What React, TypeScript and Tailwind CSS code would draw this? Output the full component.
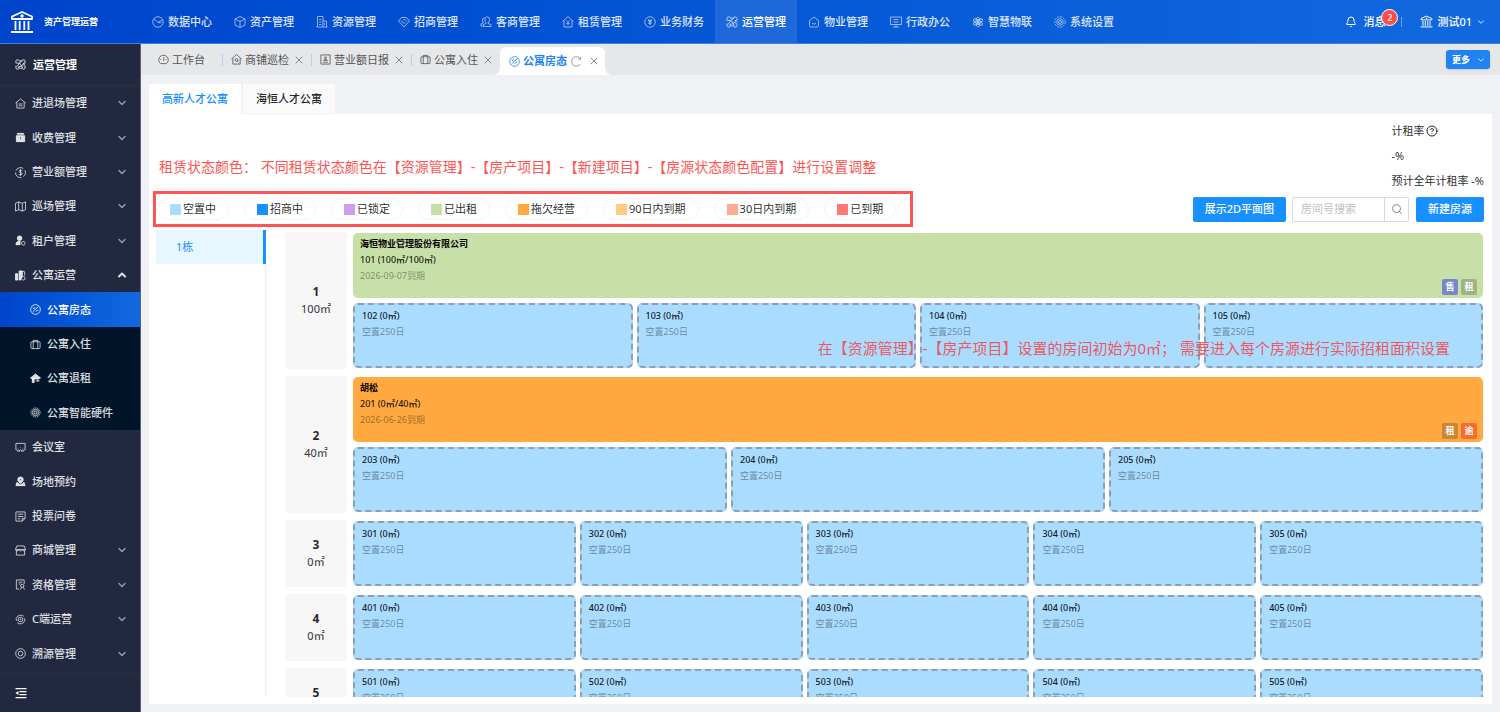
import React from 'react';
import clsx from 'clsx';
import { Bell, ChevronDown, ChevronUp, CircleHelp, Search, X } from 'lucide-react';

/** Dessins des icônes, sur une grille de 24 x 24 */
const ICONS: Record<string, React.ReactNode> = {
  data: (
    <>
      <circle cx="12" cy="12" r="10.500" />
      <path d="M4 6l8 7 9-6M12 13l5 1 3-3" />
    </>
  ),
  box: <path d="M12 1l10 5v12l-10 5-10-5V6zM2 6l10 5 10-5M12 11v12" />,
  building: <path d="M3 22V1h11v21M14 10h7v12M1 22h22M6 7h5M6 12h5M6 17h5M17 14v4" />,
  deal: <path d="M7 3h10l6 7-11 12L1 10zM6 9l6 6 3-3M10 9l3-3 5 5" />,
  clients: (
    <>
      <path d="M15 2a4 4 0 014 4v3a5 5 0 01-3 4v2l6 2v4H7v-4l5-2v-2a5 5 0 01-2-4V6a4 4 0 015-4z" />
      <path d="M9 4a4 4 0 00-4 4c0 3 1 4 2 5l-5 3v4h4" />
    </>
  ),
  rent: <path d="M1 11L12 1l11 10M4 9v13h16V9M9 9l3 4 3-4M12 13v6M9 15h6" />,
  finance: (
    <>
      <circle cx="12" cy="12" r="10.500" />
      <path d="M8 7l4 4 4-4M12 11v7M9 12h6M9 15h6" strokeWidth="2.200" />
    </>
  ),
  operate: (
    <>
      <path d="M8 2H5a3 3 0 00-3 3v4M16 2h3a3 3 0 013 3v4M22 15v4a3 3 0 01-3 3h-3M8 22H5a3 3 0 01-3-3v-4" />
      <path d="M3 9h6l7-5M8 4h8M4 17l6-8 5 6 5-7v8M8 20h8l-1-5-7 2z" />
    </>
  ),
  property: <path d="M12 2l9 7v10a3 3 0 01-3 3H6a3 3 0 01-3-3V9zM8 14c2 3 6 3 8 0" />,
  monitor: <path d="M1 2h22v15H1zM7 7h10M7 12h10M12 17v5M6 22h12" />,
  atom: (
    <>
      <ellipse cx="12" cy="12" rx="10" ry="4" transform="rotate(30 12 12)" />
      <ellipse cx="12" cy="12" rx="10" ry="4" transform="rotate(90 12 12)" />
      <ellipse cx="12" cy="12" rx="10" ry="4" transform="rotate(150 12 12)" />
      <circle cx="12" cy="12" r="2" fill="currentColor" />
    </>
  ),
  gear: (
    <>
      <circle cx="12" cy="12" r="10.500" strokeDasharray="4 2" />
      <path d="M12 5l6 3.500v7L12 19l-6-3.500v-7z" />
      <circle cx="12" cy="12" r="3" />
    </>
  ),
  home: <path d="M1 11L12 2l11 9M4 9v13h16V9M8 13h8M8 17h8" />,
  bag: (
    <path
      fill="currentColor"
      fillRule="evenodd"
      d="M5 3h14v2H5zM3 8h18v13H3zM12 10l-3 4h2v4h2v-4h2z"
    />
  ),
  dollar: (
    <>
      <path d="M18 3A11 11 0 002 8M1 12a11 11 0 0013 11M18 21a11 11 0 004-14" />
      <path d="M16 8c-2-2-7-1-7 1.500S16 12 16 14.500 10 18 8 16M12 5v14" />
    </>
  ),
  map: <path d="M1 5l7-3 8 3 7-3v17l-7 3-8-3-7 3zM8 2v17M16 5v17" />,
  tenant: (
    <>
      <circle cx="10" cy="7" r="5" fill="currentColor" />
      <path d="M2 21c0-6 4-8 9-8v8z" fill="currentColor" />
      <circle cx="18" cy="18" r="4" />
    </>
  ),
  apartment: (
    <>
      <path d="M1 8h5v14H1zM9 2h7v10l-4 10H9z" fill="currentColor" />
      <path d="M21 4v8M16 3h5" />
      <circle cx="18" cy="18" r="4" />
    </>
  ),
  state: (
    <>
      <circle cx="12" cy="12" r="10.500" />
      <path d="M6 17L18 6M6 9l3 1 2-3M13 17l3-4 2 1" />
    </>
  ),
  suitcase: <path d="M4 6h16a2 2 0 012 2v11a2 2 0 01-2 2H4a2 2 0 01-2-2V8a2 2 0 012-2zM7 21V3h10v18" />,
  leave: (
    <>
      <path fill="currentColor" d="M12 2L1 11h3v2h16v-2h3z" />
      <path fill="currentColor" d="M5 13h4v8H5z" />
      <path d="M12 17h9M17 14v6" />
    </>
  ),
  chip: (
    <>
      <circle cx="12" cy="12" r="10" strokeDasharray="3 1.500" />
      <circle cx="12" cy="12" r="7" />
      <path d="M9 9h6v6H9z" />
    </>
  ),
  meeting: (
    <>
      <path d="M4 17H2V3h20v14h-2" />
      <path d="M5 21c0-5 4-5 4 0 0-5 6-5 6 0 0-5 4-5 4 0M7 13v1M12 12v1M17 13v1" />
    </>
  ),
  booking: (
    <path
      fill="currentColor"
      fillRule="evenodd"
      d="M12 2a6 6 0 016 6c0 3-3 6-6 8-3-2-6-5-6-8a6 6 0 016-6zM12 6a2 2 0 100 4 2 2 0 000-4zM4 14l8 5 8-5 2 7H2z"
    />
  ),
  survey: <path d="M2 2h20v14l-6 6H2zM6 7h12M6 12h12M6 17h6M16 22v-6h6" />,
  shop: <path d="M4 2h16l3 8H1zM3 12v10h18V12M1 10c3 4 5 4 7 0 2 4 6 4 8 0 2 4 5 4 7 0" />,
  cert: (
    <>
      <path d="M9 22H3V2h17v9M8 7h8M8 11h4" />
      <circle cx="16" cy="15" r="3.500" />
      <path d="M14 18l-2 5M18 18l3 5" />
    </>
  ),
  eye: (
    <>
      <path d="M3 9a10 10 0 0116-4M21 15a10 10 0 01-16 4M2 9l2 6M22 15l-2-6" />
      <circle cx="12" cy="12" r="5" />
      <circle cx="12" cy="12" r="1" />
    </>
  ),
  trace: (
    <>
      <circle cx="12" cy="12" r="10.500" />
      <circle cx="12" cy="12" r="5" />
    </>
  ),
  fold: (
    <>
      <path d="M1 3h22M9 9h14M9 15h14M1 21h22" strokeWidth="2.500" />
      <path d="M1 12l6-4v8z" fill="currentColor" stroke="none" />
    </>
  ),
  dashboard: (
    <>
      <path d="M6 21a10.500 10 0 1112 0z" />
      <path d="M12 15l1-8M5 12h2M17 12h2" />
    </>
  ),
  patrol: (
    <>
      <path d="M1 11L12 1l11 10M4 9v13h16V9" />
      <circle cx="12" cy="13" r="3" />
      <path d="M14 15l2 3" />
    </>
  ),
  daily: (
    <>
      <path d="M2 2h20v20H2zM7 18h10" />
      <circle cx="12" cy="8" r="2" />
      <path d="M8 14c1-4 7-4 8 0z" />
    </>
  ),
  refresh: <path d="M21 17a10.500 10.500 0 110-10M21 2v5h-5" />,
  bank: (
    <>
      <path d="M12 2L2 6.500V9h20V6.500zM5.500 11v9M9.700 11v9M14.300 11v9M18.500 11v9M1 22h22" />
      <circle cx="12" cy="6" r="0.800" />
    </>
  ),
};

const Icon: React.FC<{ name: string; className?: string }> = ({ name, className }) => (
  <svg
    viewBox="0 0 24 24"
    fill="none"
    stroke="currentColor"
    strokeWidth="1.800"
    strokeLinejoin="round"
    className={clsx('shrink-0', className)}
    aria-hidden="true"
  >
    {ICONS[name]}
  </svg>
);

const NAV = [
  { icon: 'data', label: '数据中心' },
  { icon: 'box', label: '资产管理' },
  { icon: 'building', label: '资源管理' },
  { icon: 'deal', label: '招商管理' },
  { icon: 'clients', label: '客商管理' },
  { icon: 'rent', label: '租赁管理' },
  { icon: 'finance', label: '业务财务' },
  { icon: 'operate', label: '运营管理', active: true },
  { icon: 'property', label: '物业管理' },
  { icon: 'monitor', label: '行政办公' },
  { icon: 'atom', label: '智慧物联' },
  { icon: 'gear', label: '系统设置' },
];

interface MenuEntry {
  icon: string;
  label: string;
  arrow?: 'down' | 'up';
  sub?: boolean;
  active?: boolean;
}

const MENU: MenuEntry[] = [
  { icon: 'home', label: '进退场管理', arrow: 'down' },
  { icon: 'bag', label: '收费管理', arrow: 'down' },
  { icon: 'dollar', label: '营业额管理', arrow: 'down' },
  { icon: 'map', label: '巡场管理', arrow: 'down' },
  { icon: 'tenant', label: '租户管理', arrow: 'down' },
  { icon: 'apartment', label: '公寓运营', arrow: 'up' },
  { icon: 'state', label: '公寓房态', sub: true, active: true },
  { icon: 'suitcase', label: '公寓入住', sub: true },
  { icon: 'leave', label: '公寓退租', sub: true },
  { icon: 'chip', label: '公寓智能硬件', sub: true },
  { icon: 'meeting', label: '会议室' },
  { icon: 'booking', label: '场地预约' },
  { icon: 'survey', label: '投票问卷' },
  { icon: 'shop', label: '商城管理', arrow: 'down' },
  { icon: 'cert', label: '资格管理', arrow: 'down' },
  { icon: 'eye', label: 'C端运营', arrow: 'down' },
  { icon: 'trace', label: '溯源管理', arrow: 'down' },
];

const TABS = [
  { icon: 'patrol', label: '商铺巡检' },
  { icon: 'daily', label: '营业额日报' },
  { icon: 'suitcase', label: '公寓入住' },
];

const LEGEND = [
  { color: 'bg-[#aadcff]', label: '空置中' },
  { color: 'bg-[#1890ff]', label: '招商中' },
  { color: 'bg-[#ce9df0]', label: '已锁定' },
  { color: 'bg-[#c7e0a7]', label: '已出租' },
  { color: 'bg-[#ffa940]', label: '拖欠经营' },
  { color: 'bg-[#ffcc80]', label: '90日内到期' },
  { color: 'bg-[#ffab91]', label: '30日内到期' },
  { color: 'bg-[#ff7875]', label: '已到期' },
];

interface Lease {
  tenant: string;
  room: string;
  due: string;
  color: string;
  tags: { text: string; color: string }[];
}

interface Floor {
  no: number;
  area: string;
  lease?: Lease;
  rooms: string[];
}

const FLOORS: Floor[] = [
  {
    no: 1,
    area: '100㎡',
    lease: {
      tenant: '海恒物业管理股份有限公司',
      room: '101 (100㎡/100㎡)',
      due: '2026-09-07到期',
      color: 'bg-[#c7e0a7]',
      tags: [
        { text: '售', color: 'bg-[#7986cb]' },
        { text: '租', color: 'bg-[#9fb386]' },
      ],
    },
    rooms: ['102', '103', '104', '105'],
  },
  {
    no: 2,
    area: '40㎡',
    lease: {
      tenant: '胡松',
      room: '201 (0㎡/40㎡)',
      due: '2026-06-26到期',
      color: 'bg-[#ffa940]',
      tags: [
        { text: '租', color: 'bg-[#cc8733]' },
        { text: '逾', color: 'bg-[#f56c2f]' },
      ],
    },
    rooms: ['203', '204', '205'],
  },
  { no: 3, area: '0㎡', rooms: ['301', '302', '303', '304', '305'] },
  { no: 4, area: '0㎡', rooms: ['401', '402', '403', '404', '405'] },
  { no: 5, area: '0㎡', rooms: ['501', '502', '503', '504', '505'] },
];

/** Barre supérieure */
const Header: React.FC = () => (
  <header className="flex h-11 shrink-0 items-stretch border-b border-[#3a80e6] bg-gradient-to-r from-[#0044cc] to-[#1269df] text-white">
    <div className="flex w-[141px] shrink-0 items-center gap-2.5 pl-2.5">
      <Icon name="bank" className="size-6" />
      <h1 className="text-[9px] font-bold whitespace-nowrap">资产管理运营</h1>
    </div>
    <nav className="flex">
      {NAV.map((item) => (
        <a
          key={item.label}
          href="#"
          className={clsx(
            'flex items-center gap-1 px-[11px] font-medium whitespace-nowrap',
            item.active ? 'bg-white/10 text-white' : 'text-white/85'
          )}
        >
          <Icon name={item.icon} className="size-3 opacity-75" />
          {item.label}
        </a>
      ))}
    </nav>
    <div className="ml-auto flex items-center pr-3.5 font-medium">
      <button className="relative flex items-center gap-1.5">
        <Bell className="size-3" />
        消息
        <span className="absolute -top-[5px] left-9 flex size-[17px] items-center justify-center rounded-full border border-white bg-[#ff4d4f] text-[9px] leading-none">
          2
        </span>
      </button>
      <span className="ml-4 h-2.5 w-px bg-white/40" />
      <button className="ml-[18px] flex items-center gap-1">
        <Icon name="bank" className="size-[13px]" />
        测试01
        <ChevronDown className="size-2.5" />
      </button>
    </div>
  </header>
);

/** Menu latéral */
const Sidebar: React.FC = () => (
  <aside className="flex w-[141px] shrink-0 flex-col border-r border-[#5b6374] bg-[#212840] text-white">
    <div className="flex h-[42px] shrink-0 items-center gap-[7px] border-b border-[#2d3035] pl-[15px] font-bold">
      <Icon name="operate" className="size-[11px]" />
      运营管理
    </div>
    <ul className="mb-0.5 flex flex-1 flex-col">
      {MENU.map((item) => (
        <li key={item.label} className="flex flex-1">
          <a
            href="#"
            className={clsx(
              'flex flex-1 items-center gap-1.5 pr-3 font-medium',
              item.sub ? 'pl-[30px]' : 'pl-[15px]',
              item.sub && !item.active && 'bg-[#001529]',
              item.active && 'bg-gradient-to-r from-[#0044cc] to-[#1269df]',
              item.active ? 'text-white' : 'text-white/85'
            )}
          >
            <Icon name={item.icon} className="size-[11px]" />
            <span className="flex-1 whitespace-nowrap">{item.label}</span>
            {item.arrow === 'down' && <ChevronDown className="size-3 opacity-60" strokeWidth={3} />}
            {item.arrow === 'up' && <ChevronUp className="size-3" strokeWidth={4} />}
          </a>
        </li>
      ))}
    </ul>
    <button
      aria-label="收起"
      className="flex h-[39px] shrink-0 items-center border-t border-[#2d3035] pl-[15px]"
    >
      <Icon name="fold" className="size-3" />
    </button>
  </aside>
);

/** Onglets des pages ouvertes */
const PageTabs: React.FC = () => (
  <div className="flex h-[31px] shrink-0 items-center bg-[#e5e7e9] text-[#555]">
    <a href="#" className="flex items-center gap-[3px] px-[17px]">
      <Icon name="dashboard" className="size-[11px]" />
      工作台
    </a>
    {TABS.map((tab) => (
      <div key={tab.label} className="relative flex items-center pr-1.5 pl-[9px]">
        <span className="absolute left-0 h-3 w-px bg-[#b5d0f2]" />
        <a href="#" className="flex items-center gap-[3px]">
          <Icon name={tab.icon} className="size-[11px]" />
          {tab.label}
        </a>
        <button aria-label="关闭" className="ml-1">
          <X className="size-3 text-[#888]" />
        </button>
      </div>
    ))}
    <div className="relative flex h-7 items-center self-end rounded-t-md bg-white pr-[5px] pl-[9px]">
      <span className="absolute bottom-0 -left-1.5 size-1.5 bg-[radial-gradient(circle_at_0_0,transparent_5px,white_6px)]" />
      <span className="absolute -right-1.5 bottom-0 size-1.5 bg-[radial-gradient(circle_at_100%_0,transparent_5px,white_6px)]" />
      <a href="#" className="flex items-center gap-[3px] font-bold text-[#2182f3]">
        <Icon name="state" className="size-[11px]" />
        公寓房态
      </a>
      <button aria-label="刷新" className="ml-1">
        <Icon name="refresh" className="size-[11px] text-[#888]" />
      </button>
      <button aria-label="关闭" className="ml-1.5">
        <X className="size-3 text-[#888]" />
      </button>
    </div>
    <button className="mr-2.5 ml-auto flex h-[19px] items-center gap-1.5 rounded-[3px] bg-[#2182f3] pr-1 pl-1.5 text-[9px] font-bold text-white shadow-sm">
      更多
      <ChevronDown className="size-2.5" />
    </button>
  </div>
);

const LeaseCard: React.FC<{ lease: Lease }> = ({ lease }) => (
  <div
    className={clsx('relative h-[65px] rounded-[5px] px-[7px] py-[3px] text-[9px] leading-4', lease.color)}
  >
    <p className="font-bold text-black">{lease.tenant}</p>
    <p className="font-medium text-black/90">{lease.room}</p>
    <p className="text-black/40">{lease.due}</p>
    <div className="absolute right-1.5 bottom-[3px] flex gap-[3px]">
      {lease.tags.map((tag) => (
        <span
          key={tag.text}
          className={clsx('size-4 rounded-[2px] text-center font-bold text-white', tag.color)}
        >
          {tag.text}
        </span>
      ))}
    </div>
  </div>
);

const RoomCard: React.FC<{ room: string }> = ({ room }) => (
  <div className="h-[65px] flex-1 rounded-[5px] border-2 border-dashed border-[#8c9fb3] bg-[#aadcff] px-[7px] py-[3px] text-[9px] leading-4">
    <p className="font-medium text-black/90">{room} (0㎡)</p>
    <p className="text-black/40">空置250日</p>
  </div>
);

const FloorRow: React.FC<{ floor: Floor }> = ({ floor }) => (
  <div className="flex shrink-0 gap-1.5">
    <div className="flex w-[62px] shrink-0 flex-col items-center justify-center rounded-[3px] bg-[#f7f7f7] leading-[18px] text-[#333]">
      <span className="text-xs font-bold text-black/85">{floor.no}</span>
      <span>{floor.area}</span>
    </div>
    <div className="flex flex-1 flex-col gap-[5px] py-px">
      {floor.lease && <LeaseCard lease={floor.lease} />}
      <div className="flex gap-1">
        {floor.rooms.map((room) => (
          <RoomCard key={room} room={room} />
        ))}
      </div>
    </div>
  </div>
);

/** Plan des logements par étage */
const RoomBoard: React.FC = () => (
  <div className="mt-[3px] mr-[9px] mb-[7px] ml-[7px] flex min-h-0 flex-1">
    <ul className="w-[110px] shrink-0 border-r border-[#eeeeee]">
      <li className="-mr-px">
        <a
          href="#"
          className="block border-r-[3px] border-[#1890ff] bg-[#e6f7ff] pl-5 leading-[34px] text-[#1890ff]"
        >
          1栋
        </a>
      </li>
    </ul>
    <div className="relative mt-0.5 ml-[19px] flex flex-1 flex-col gap-[7px] overflow-hidden">
      {FLOORS.map((floor) => (
        <FloorRow key={floor.no} floor={floor} />
      ))}
      <p className="absolute top-[104px] right-[33px] text-[15px] leading-6 whitespace-pre text-[#f5484b]/90">
        在【资源管理】-【房产项目】设置的房间初始为0㎡； 需要进入每个房源进行实际招租面积设置
      </p>
    </div>
  </div>
);

const App: React.FC = () => (
  <div className="flex h-screen flex-col overflow-hidden bg-[#f0f1f5] font-['Noto_Sans','Noto_Sans_CJK_SC',sans-serif] text-[11px] leading-4">
    <Header />
    <div className="flex min-h-0 flex-1">
      <Sidebar />
      <main className="flex min-w-0 flex-1 flex-col">
        <PageTabs />
        <div className="mx-2 mt-[9px] flex gap-0.5 font-medium">
          <button className="h-[30px] bg-white px-[13px] text-[#1890ff]">高新人才公寓</button>
          <button className="mb-px h-[29px] bg-[#fafafa] px-[13px] text-black/85">海恒人才公寓</button>
        </div>
        <section className="mx-2 mb-2 flex min-h-0 flex-1 flex-col bg-white">
          <div className="flex shrink-0 items-end justify-between pt-[9px] pr-2 pb-0.5 pl-2.5">
            <p className="mb-2.5 text-sm leading-6 whitespace-pre text-[#ff5552]">
              租赁状态颜色： 不同租赁状态颜色在【资源管理】-【房产项目】-【新建项目】-【房源状态颜色配置】进行设置调整
            </p>
            <div className="flex flex-col gap-[9px] text-black/85">
              <span className="flex items-center gap-0.5">
                计租率
                <CircleHelp className="size-3" />
              </span>
              <span>-%</span>
              <span>预计全年计租率 -%</span>
            </div>
          </div>
          <div className="flex shrink-0 items-center justify-between pr-2 pl-1">
            <ul className="flex gap-[15px] border-[3px] border-[#ff5552] py-1 pr-3.5 pl-px">
              {LEGEND.map((item) => (
                <li
                  key={item.label}
                  className="flex h-[22px] items-center gap-0.5 rounded-full border border-[#f3f3f3] px-3 whitespace-nowrap text-black/85"
                >
                  <span className={clsx('size-[11px]', item.color)} />
                  {item.label}
                </li>
              ))}
            </ul>
            <div className="flex h-[25px] font-medium">
              <button className="rounded-[2px] bg-[#1890ff] px-3 text-white">展示2D平面图</button>
              <div className="mr-[7px] ml-1.5 flex rounded-[2px] border border-[#d9d9d9]">
                <input
                  type="text"
                  aria-label="房间号搜索"
                  placeholder="房间号搜索"
                  className="w-[91px] px-2 font-normal outline-none placeholder:text-[#bfbfbf]"
                />
                <button
                  aria-label="搜索"
                  className="flex w-6 items-center justify-center border-l border-[#d9d9d9] text-[#888]"
                >
                  <Search className="size-3" />
                </button>
              </div>
              <button className="rounded-[2px] bg-[#1890ff] px-3 text-white">新建房源</button>
            </div>
          </div>
          <RoomBoard />
        </section>
      </main>
    </div>
  </div>
);

export default App;
